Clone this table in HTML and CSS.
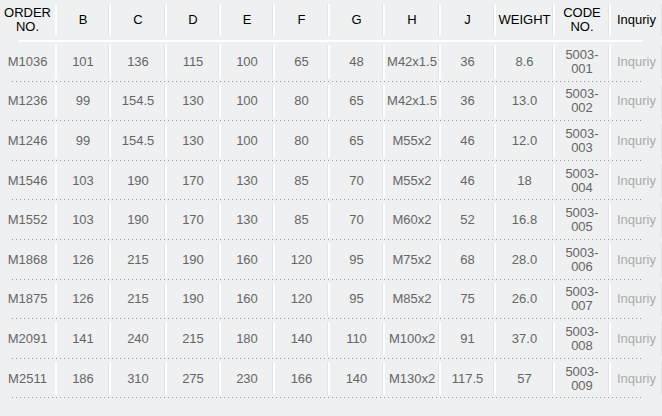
FILE: index.html
```html
<!DOCTYPE html>
<html>
<head>
<meta charset="utf-8">
<link rel="stylesheet" href="styles.css">
</head>
<body>
<div class="table">
  <div class="row head">
    <div class="cell">ORDER<br>NO.</div>
    <div class="cell">B</div>
    <div class="cell">C</div>
    <div class="cell">D</div>
    <div class="cell">E</div>
    <div class="cell">F</div>
    <div class="cell">G</div>
    <div class="cell">H</div>
    <div class="cell">J</div>
    <div class="cell">WEIGHT</div>
    <div class="cell">CODE<br>NO.</div>
    <div class="cell">Inquriy</div>
  </div>
  <div class="row"><div class="cell">M1036</div><div class="cell">101</div><div class="cell">136</div><div class="cell">115</div><div class="cell">100</div><div class="cell">65</div><div class="cell">48</div><div class="cell">M42x1.5</div><div class="cell">36</div><div class="cell">8.6</div><div class="cell">5003-<br>001</div><div class="cell inq">Inquriy</div></div>
  <div class="row"><div class="cell">M1236</div><div class="cell">99</div><div class="cell">154.5</div><div class="cell">130</div><div class="cell">100</div><div class="cell">80</div><div class="cell">65</div><div class="cell">M42x1.5</div><div class="cell">36</div><div class="cell">13.0</div><div class="cell">5003-<br>002</div><div class="cell inq">Inquriy</div></div>
  <div class="row"><div class="cell">M1246</div><div class="cell">99</div><div class="cell">154.5</div><div class="cell">130</div><div class="cell">100</div><div class="cell">80</div><div class="cell">65</div><div class="cell">M55x2</div><div class="cell">46</div><div class="cell">12.0</div><div class="cell">5003-<br>003</div><div class="cell inq">Inquriy</div></div>
  <div class="row"><div class="cell">M1546</div><div class="cell">103</div><div class="cell">190</div><div class="cell">170</div><div class="cell">130</div><div class="cell">85</div><div class="cell">70</div><div class="cell">M55x2</div><div class="cell">46</div><div class="cell">18</div><div class="cell">5003-<br>004</div><div class="cell inq">Inquriy</div></div>
  <div class="row"><div class="cell">M1552</div><div class="cell">103</div><div class="cell">190</div><div class="cell">170</div><div class="cell">130</div><div class="cell">85</div><div class="cell">70</div><div class="cell">M60x2</div><div class="cell">52</div><div class="cell">16.8</div><div class="cell">5003-<br>005</div><div class="cell inq">Inquriy</div></div>
  <div class="row"><div class="cell">M1868</div><div class="cell">126</div><div class="cell">215</div><div class="cell">190</div><div class="cell">160</div><div class="cell">120</div><div class="cell">95</div><div class="cell">M75x2</div><div class="cell">68</div><div class="cell">28.0</div><div class="cell">5003-<br>006</div><div class="cell inq">Inquriy</div></div>
  <div class="row"><div class="cell">M1875</div><div class="cell">126</div><div class="cell">215</div><div class="cell">190</div><div class="cell">160</div><div class="cell">120</div><div class="cell">95</div><div class="cell">M85x2</div><div class="cell">75</div><div class="cell">26.0</div><div class="cell">5003-<br>007</div><div class="cell inq">Inquriy</div></div>
  <div class="row"><div class="cell">M2091</div><div class="cell">141</div><div class="cell">240</div><div class="cell">215</div><div class="cell">180</div><div class="cell">140</div><div class="cell">110</div><div class="cell">M100x2</div><div class="cell">91</div><div class="cell">37.0</div><div class="cell">5003-<br>008</div><div class="cell inq">Inquriy</div></div>
  <div class="row"><div class="cell">M2511</div><div class="cell">186</div><div class="cell">310</div><div class="cell">275</div><div class="cell">230</div><div class="cell">166</div><div class="cell">140</div><div class="cell">M130x2</div><div class="cell">117.5</div><div class="cell">57</div><div class="cell">5003-<br>009</div><div class="cell inq">Inquriy</div></div>
</div>
</body>
</html>
```
FILE: styles.css
```css
html, body {
  margin: 0;
  padding: 0;
  background: #eef0f1;
}
body {
  font-family: "Liberation Sans", Arial, sans-serif;
  font-size: 13px;
  color: #666;
  width: 662px;
  height: 416px;
  overflow: hidden;
}
.table {
  display: flex;
  flex-direction: column;
}
.row {
  position: relative;
  display: grid;
  grid-template-columns: 55px 54px 56px 54px 54px 55px 55px 56px 55px 59px 56px 1fr;
  height: 39.6px;
  box-sizing: border-box;
}
.row::after {
  content: "";
  position: absolute;
  left: 12px;
  right: 19px;
  bottom: 0;
  height: 1px;
  background-image: linear-gradient(to right, #9a9a9a 1px, transparent 1px);
  background-size: 4px 1px;
}
.row.head {
  height: 42px;
  color: #000;
  padding-bottom: 2px;
}
.row.head::after {
  left: 19px;
  height: 2px;
  background: #fff;
}
.cell {
  display: flex;
  align-items: center;
  justify-content: center;
  text-align: center;
  line-height: 14px;
  margin: 3px 0 3px 0;
}
.head .cell {
  margin: 4px 0 4px 0;
  line-height: 14.5px;
}
.cell + .cell {
  border-left: 2px solid #fff;
  box-shadow: -1px 0 0 #e2e5e7 inset;
}
.cell.inq {
  color: #aaa;
}
```
